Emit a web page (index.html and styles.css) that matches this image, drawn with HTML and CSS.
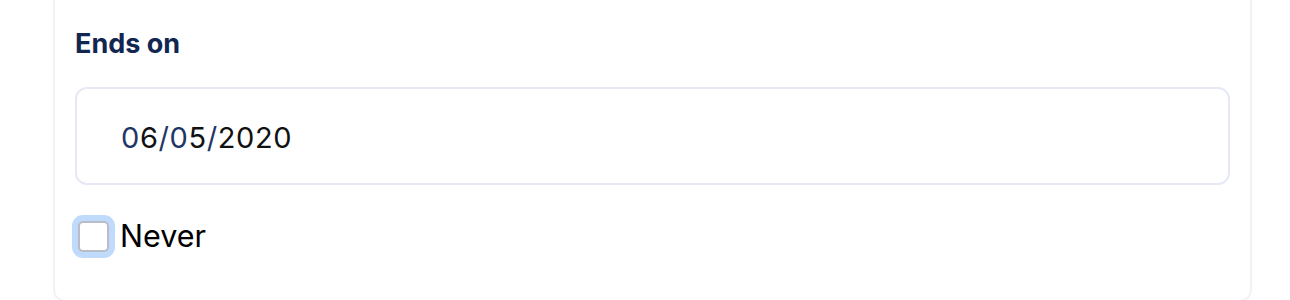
FILE: index.html
```html
<!DOCTYPE html>
<html lang="en">
<head>
<meta charset="utf-8">
<title>Ends on</title>
<link rel="stylesheet" href="styles.css">
</head>
<body>
<div class="card">
  <div class="field-label">Ends on</div>
  <div class="date-input"><span class="seg">0</span>6<span class="seg">/0</span>5<span class="seg">/</span>2020</div>
  <label class="check-row">
    <span class="checkbox"></span>
    <span class="check-text">Never</span>
  </label>
</div>
</body>
</html>
```

FILE: styles.css
```css
html, body {
  margin: 0;
  padding: 0;
  background: #ffffff;
}
body {
  font-family: Inter, "Noto Sans", sans-serif;
  height: 300px;
  overflow: hidden;
}
.card {
  margin-left: 53px;
  width: 1175px;
  border: 2px solid #f2f2f5;
  border-top: none;
  border-radius: 0 0 12px 12px;
  padding: 28px 0 46px 20px;
  box-sizing: content-box;
}
.field-label {
  font-size: 27px;
  font-weight: 700;
  line-height: 32px;
  color: #112651;
}
.date-input {
  margin-top: 27px;
  box-sizing: border-box;
  width: 1155px;
  height: 98px;
  border: 2px solid #e6e9f5;
  border-radius: 12px;
  display: flex;
  align-items: center;
  padding-left: 44px;
  padding-top: 3px;
  font-size: 29px;
  font-weight: 400;
  letter-spacing: 0.6px;
  color: #111111;
}
.seg {
  color: #1f3766;
}
.check-row {
  display: flex;
  align-items: center;
  gap: 11px;
  margin-top: 33px;
  margin-left: 3px;
}
.checkbox {
  width: 27px;
  height: 27px;
  border: 2px solid #b9bdc7;
  border-radius: 5px;
  background: #ffffff;
  box-shadow: 0 0 0 6px #c0dafc;
  display: block;
}
.check-text {
  font-size: 30.5px;
  line-height: 36px;
  color: #000000;
}
```
